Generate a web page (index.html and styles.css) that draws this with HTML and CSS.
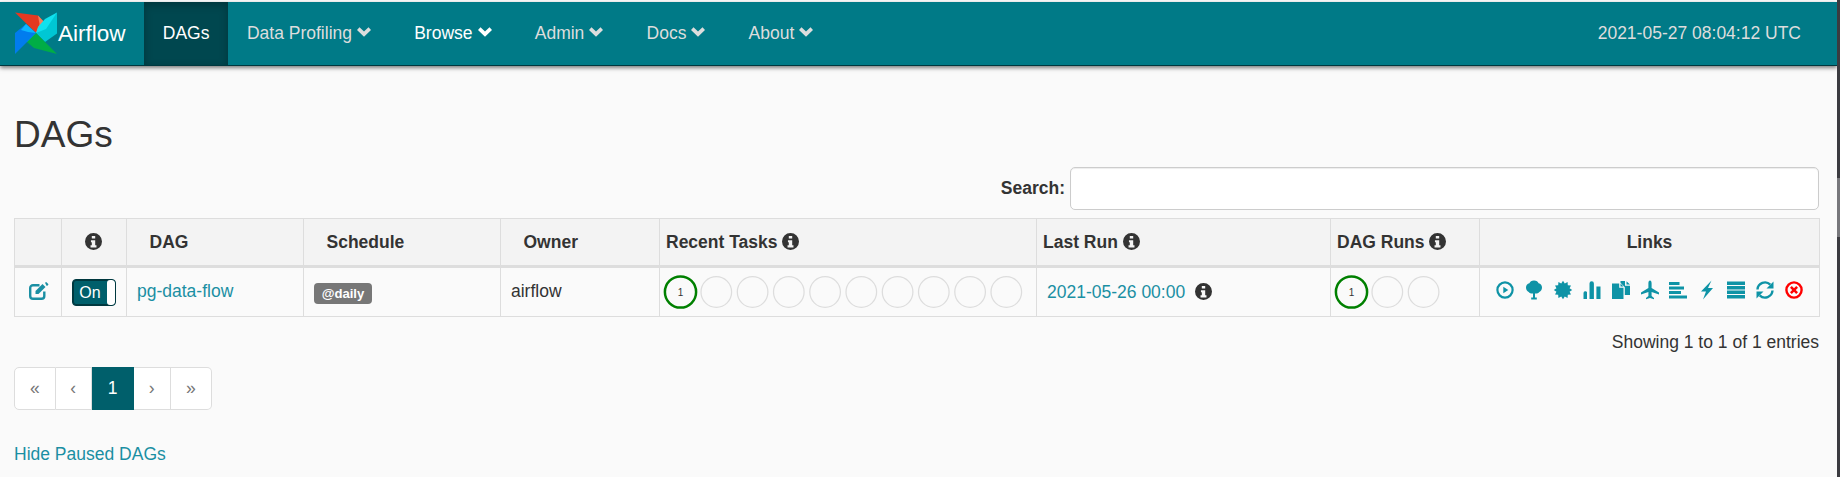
FILE: index.html
```html
<!DOCTYPE html>
<html lang="en">
<head>
<meta charset="utf-8">
<title>Airflow - DAGs</title>
<link rel="stylesheet" href="styles.css">
</head>
<body>
<svg class="sprite" aria-hidden="true">
  <symbol id="i-info" viewBox="0 0 20 20"><path fill-rule="evenodd" d="M10 0a10 10 0 1 0 0 20a10 10 0 0 0 0-20zM8 3.500h4v3H8zM7 8.500h5v6h1.500v2.500h-7v-2.500H8v-3.500H7z"/></symbol>
  <symbol id="i-chev" viewBox="0 0 14 10"><path d="M0 3l2.500-2.700L7 4.600 11.500.3 14 3 7 9.800z"/></symbol>
  <symbol id="i-play" viewBox="0 0 20 20"><circle cx="10" cy="10" r="7.600" fill="none" stroke="currentColor" stroke-width="2.200"/><path d="M8.300 6.800l5 3.200-5 3.200z"/></symbol>
  <symbol id="i-tree" viewBox="0 0 20 20"><path d="M10 .5c2.500 0 4 1.200 4.600 2.700 2.100.5 3.400 2.100 3.400 4.300 0 2.200-1.100 3.700-2.700 4.400-1 1.200-2.800 1.800-4.300 1.500V17.500h1.800V19.500h-5.600V17.500H9V13.400c-1.500.3-3.300-.3-4.300-1.500C3.100 11.200 2 9.700 2 7.500c0-2.200 1.300-3.800 3.400-4.300C6 1.700 7.500.5 10 .5z"/></symbol>
  <symbol id="i-cert" viewBox="0 0 20 20"><polygon points="19.200,10 16.570,11.760 17.970,14.600 14.810,14.810 14.600,17.970 11.760,16.570 10,19.200 8.240,16.570 5.400,17.970 5.190,14.810 2.030,14.600 3.430,11.760 .8,10 3.430,8.240 2.030,5.400 5.190,5.190 5.400,2.030 8.240,3.430 10,.8 11.760,3.430 14.600,2.030 14.810,5.190 17.970,5.400 16.570,8.240"/></symbol>
  <symbol id="i-bars" viewBox="0 0 20 20"><path d="M1.500 13a2 2 0 0 1 3.500-1V19H1.500zM7.500 3.500a2.200 2.200 0 0 1 4.400 0V19H7.500zM14.400 6.500h4.100V19h-4.100z"/></symbol>
  <symbol id="i-docs" viewBox="0 0 20 20"><path d="M1 3.500h7.200v4.300h4.300V19H1zM9.500 3.500l3 3h-3zM9.500 1h4.500v4.800H19V15h-5.200V7.200L9.500 2.800zM15.500 1.200L19 4.500h-3.500z"/></symbol>
  <symbol id="i-plane" viewBox="0 0 20 20"><path d="M10 .5c1 0 1.600 1.300 1.600 3V8l7.400 4.400v2l-7.400-2.400v4l2.400 2v1.300L10 18l-4 1.300V18l2.400-2v-4L1 14.400v-2L8.400 8V3.500C8.400 1.800 9 .5 10 .5z"/></symbol>
  <symbol id="i-gantt" viewBox="0 0 20 20"><path d="M1 2h10.500v3H1zM1 6.500h15v3H1zM1 11h12v3H1zM1 15.500h18v3H1z"/></symbol>
  <symbol id="i-bolt" viewBox="0 0 20 20"><path d="M14.500.5L4 11.500h5L6 19.500 16 8h-5z"/></symbol>
  <symbol id="i-list" viewBox="0 0 20 20"><path d="M1 1.500h18v3.500H1zM1 6h18v3.500H1zM1 10.500h18v3.500H1zM1 15h18v3.500H1z"/></symbol>
  <symbol id="i-sync" viewBox="0 0 20 20"><path d="M2.500 9.500A7.500 7.500 0 0 1 15.300 4.700" fill="none" stroke="currentColor" stroke-width="2.400"/><path d="M18.500 1.500v7h-7z"/><path d="M17.500 10.500A7.500 7.500 0 0 1 4.700 15.300" fill="none" stroke="currentColor" stroke-width="2.400"/><path d="M1.500 18.500v-7h7z"/></symbol>
  <symbol id="i-kill" viewBox="0 0 20 20"><circle cx="10" cy="10" r="7.600" fill="none" stroke="currentColor" stroke-width="2.400"/><path d="M7.800 6l2.200 2.200L12.200 6 14 7.800 11.800 10l2.200 2.200-1.800 1.800L10 11.800 7.800 14 6 12.200 8.200 10 6 7.800z"/></symbol>
</svg>
<div class="page">
  <nav class="navbar">
    <a class="brand" href="#">
      <svg class="logo" viewBox="0 0 44 44">
        <path fill="#e43921" d="M1 1.500L24 4.500 32 13 22 22z"/>
        <path fill="#f37e5c" d="M24 4.500L32 13 22 22 25.500 13z"/>
        <path fill="#00c7d4" d="M43 1.500V22.500L31 31 22 22z"/>
        <path fill="#11e1ee" d="M43 1.500L31 8 24 16 22 22 32 18z"/>
        <path fill="#00ad46" d="M43 43L20 37 13 31 22 22z"/>
        <path fill="#04d659" d="M22 22L13 31 13 25 17 21z"/>
        <path fill="#017cee" d="M1 43V22L12 13 22 22z"/>
        <path fill="#0cb6ff" d="M12 13L22 22 14 21 7 19z"/>
      </svg>
      <span>Airflow</span>
    </a>
    <ul class="menu">
      <li class="item active"><a href="#">DAGs</a></li>
      <li class="item"><a href="#">Data Profiling<svg class="chev"><use href="#i-chev"/></svg></a></li>
      <li class="item bright"><a href="#">Browse<svg class="chev"><use href="#i-chev"/></svg></a></li>
      <li class="item"><a href="#">Admin<svg class="chev"><use href="#i-chev"/></svg></a></li>
      <li class="item"><a href="#">Docs<svg class="chev"><use href="#i-chev"/></svg></a></li>
      <li class="item"><a href="#">About<svg class="chev"><use href="#i-chev"/></svg></a></li>
    </ul>
    <div class="clock">2021-05-27 08:04:12 UTC</div>
  </nav>
  <main class="content">
    <h1 class="title">DAGs</h1>
    <div class="search">
      <label class="search-label" for="q">Search:</label>
      <input class="search-input" id="q" type="search">
    </div>
    <table class="dags">
      <thead>
        <tr>
          <th class="c-edit"></th>
          <th class="c-toggle ctr"><svg class="info"><use href="#i-info"/></svg></th>
          <th class="c-dag pad-l">DAG</th>
          <th class="c-sched pad-l">Schedule</th>
          <th class="c-owner pad-l">Owner</th>
          <th class="c-tasks">Recent Tasks <svg class="info"><use href="#i-info"/></svg></th>
          <th class="c-run">Last Run <svg class="info"><use href="#i-info"/></svg></th>
          <th class="c-runs">DAG Runs <svg class="info"><use href="#i-info"/></svg></th>
          <th class="c-links ctr">Links</th>
        </tr>
      </thead>
      <tbody>
        <tr>
          <td class="ctr edit-cell"><a href="#"><svg class="edit" viewBox="0 0 20 18"><path class="edit-box" d="M10.500 3.200H4A2.800 2.800 0 0 0 1.200 6v8A2.800 2.800 0 0 0 4 16.800h8.500A2.800 2.800 0 0 0 15.300 14V9.500"/><path d="M6.500 12V9L13.500 2 16.500 5 9.500 12z"/><path d="M16 .8l1.200-.8 2.300 2.300-.8 1.200-1 .5z"/></svg></a></td>
          <td class="ctr">
            <div class="toggle"><span class="toggle-on">On</span><span class="toggle-handle"></span></div>
          </td>
          <td class="text-cell"><a href="#">pg-data-flow</a></td>
          <td class="sched"><span class="badge">@daily</span></td>
          <td class="text-cell">airflow</td>
          <td class="circles-cell tasks">
            <svg class="circles c10">
              <circle class="ok" cx="17.500" cy="17" r="15.600"/><text x="17.500" y="20.500">1</text>
              <circle cx="53.300" cy="17" r="15.300"/><circle cx="89.600" cy="17" r="15.300"/><circle cx="125.800" cy="17" r="15.300"/><circle cx="162.100" cy="17" r="15.300"/><circle cx="198.300" cy="17" r="15.300"/><circle cx="234.600" cy="17" r="15.300"/><circle cx="270.800" cy="17" r="15.300"/><circle cx="307.100" cy="17" r="15.300"/><circle cx="343.300" cy="17" r="15.300"/>
            </svg>
          </td>
          <td class="last-run"><a href="#">2021-05-26 00:00</a><svg class="info"><use href="#i-info"/></svg></td>
          <td class="circles-cell">
            <svg class="circles c3">
              <circle class="ok" cx="20.500" cy="17" r="15.600"/><text x="20.500" y="20.500">1</text>
              <circle cx="56.300" cy="17" r="15.300"/><circle cx="92.600" cy="17" r="15.300"/>
            </svg>
          </td>
          <td class="links-cell">
            <div class="links">
              <svg class="lnk"><use href="#i-play"/></svg>
              <svg class="lnk"><use href="#i-tree"/></svg>
              <svg class="lnk"><use href="#i-cert"/></svg>
              <svg class="lnk"><use href="#i-bars"/></svg>
              <svg class="lnk"><use href="#i-docs"/></svg>
              <svg class="lnk"><use href="#i-plane"/></svg>
              <svg class="lnk"><use href="#i-gantt"/></svg>
              <svg class="lnk"><use href="#i-bolt"/></svg>
              <svg class="lnk"><use href="#i-list"/></svg>
              <svg class="lnk"><use href="#i-sync"/></svg>
              <svg class="lnk kill"><use href="#i-kill"/></svg>
            </div>
          </td>
        </tr>
      </tbody>
    </table>
    <div class="showing">Showing 1 to 1 of 1 entries</div>
    <ul class="pager">
      <li class="pg w1">«</li>
      <li class="pg w2">‹</li>
      <li class="pg w3 current">1</li>
      <li class="pg w2">›</li>
      <li class="pg w1">»</li>
    </ul>
    <a class="hide-paused" href="#">Hide Paused DAGs</a>
  </main>
</div>
<aside class="scrollbar"><div class="thumb"></div></aside>
</body>
</html>
```
FILE: styles.css
```css
* { box-sizing: border-box; }
html, body { margin: 0; height: 100%; }
body {
  display: flex;
  overflow: hidden;
  background: #fafafa;
  color: #333;
  font-family: "Liberation Sans", Arial, sans-serif;
  font-size: 17.5px;
  line-height: 25px;
}
a { color: #1a8fa3; text-decoration: none; }
.sprite { display: none; }
.page { flex: 1; min-width: 0; padding-top: 2px; }
.scrollbar { width: 3px; background: #3b3b40; }
.thumb { margin-top: 178px; height: 59px; background: #77777b; }

/* navbar */
.navbar {
  display: flex;
  align-items: stretch;
  height: 64px;
  background: #007a87;
  border-bottom: 1px solid #00383f;
  box-shadow: 0 2px 4px rgba(0, 0, 0, .5);
}
.brand {
  display: flex;
  align-items: center;
  width: 144px;
  padding-left: 14px;
  color: #fff;
  font-size: 22.5px;
}
.logo { width: 44px; height: 44px; flex: none; margin-bottom: 1px; }
.menu { display: flex; list-style: none; margin: 0; padding: 0; flex: 1; }
.item a {
  display: flex;
  align-items: center;
  height: 100%;
  padding: 0 18.75px;
  color: #ddd;
}
.item.bright a { color: #fff; }
.item.active a {
  color: #fff;
  background: #00474f;
  box-shadow: inset 0 3px 9px rgba(0, 0, 0, .25);
}
.chev { width: 14px; height: 10px; margin: -3px 5.7px 0 5px; fill: currentColor; }
.clock { align-self: center; padding-right: 36px; color: #ddd; }

/* content */
.content { padding: 0 18px 0 14px; }
.title {
  margin: 0;
  padding-top: 49px;
  font-size: 37px;
  line-height: 40px;
  font-weight: 400;
}
.search {
  display: flex;
  justify-content: flex-end;
  align-items: center;
  gap: 5px;
  margin-top: 12px;
}
.search-label { font-weight: 700; }
.search-input {
  width: 749px;
  height: 43px;
  background: #fff;
  border: 1px solid #ccc;
  border-radius: 5px;
  box-shadow: inset 0 1px 1px rgba(0, 0, 0, .075);
}

/* table */
.dags {
  width: 1805px;
  margin-top: 8px;
  table-layout: fixed;
  border-collapse: collapse;
  background: #fafafa;
}
.dags th, .dags td { border: 1px solid #ddd; padding: 0; vertical-align: middle; }
.dags th {
  height: 48px;
  background: #f3f3f3;
  border-bottom: 3px solid #ddd;
  text-align: left;
  padding: 0 6px;
  font-weight: 700;
}
.dags td { height: 50px; }
.dags th.ctr, .dags td.ctr { text-align: center; }
.dags th.pad-l { padding-left: 22.5px; }
.dags th.c-toggle { padding-right: 8px; }
.c-edit { width: 47px; }
.c-toggle { width: 65px; }
.c-dag { width: 177px; }
.c-sched { width: 197px; }
.c-owner { width: 159px; }
.c-tasks { width: 377px; }
.c-run { width: 294px; }
.c-runs { width: 149px; }
.c-links { width: 340px; }
.info { width: 17px; height: 17px; fill: #333; vertical-align: -2px; }
.dags td.edit-cell { padding: 0 0 4px 2px; }
.edit { width: 20px; height: 18px; fill: #1a8fa3; vertical-align: middle; }
.edit-box { fill: none; stroke: #1a8fa3; stroke-width: 2.4; }
.toggle {
  display: inline-flex;
  width: 44px;
  height: 27px;
  vertical-align: middle;
  background: #005f6b;
  border: 1px solid #00383f;
  border-radius: 4px;
  overflow: hidden;
  color: #fff;
  box-shadow: inset 0 0 0 1px #00383f;
}
.toggle-on { flex: 1; text-align: center; font-size: 16px; line-height: 25px; }
.toggle-handle { width: 8px; background: #fff; border-radius: 3px; }
.dags td.text-cell { padding: 0 0 2px 10px; }
.dags td.sched { padding-left: 10px; }
.badge {
  display: inline-block;
  width: 58px;
  height: 21px;
  background: #777;
  border-radius: 4px;
  color: #fff;
  font-size: 13.1px;
  font-weight: 700;
  line-height: 22px;
  text-align: center;
  vertical-align: middle;
  margin-top: 1px;
}
.circles-cell { line-height: 0; }
.dags td.tasks { padding-left: 3px; }
.circles { height: 34px; vertical-align: middle; }
.circles.c10 { width: 370px; }
.circles.c3 { width: 120px; }
.circles circle { fill: none; stroke: #ddd; stroke-width: 1.25; }
.circles circle.ok { stroke: #008000; stroke-width: 2.5; }
.circles text { font-size: 10px; text-anchor: middle; fill: #333; font-family: "Liberation Sans", Arial, sans-serif; }
.dags td.last-run { padding-left: 10px; }
.last-run .info { margin-left: 10px; }
.links { display: flex; justify-content: center; gap: 8.9px; padding-bottom: 5px; }
.lnk { width: 20px; height: 20px; fill: #0e93a6; color: #0e93a6; flex: none; }
.lnk.kill { fill: #f00; color: #f00; }

/* footer bits */
.showing { margin-top: 13px; text-align: right; }
.pager {
  display: flex;
  width: max-content;
  margin: 12px 0 0;
  padding: 0;
  list-style: none;
}
.pg {
  height: 43px;
  line-height: 41px;
  text-align: center;
  background: #fff;
  border: 1px solid #ddd;
  border-left-width: 0;
  color: #777;
}
.pg:first-child { border-left-width: 1px; border-radius: 5px 0 0 5px; }
.pg:last-child { border-radius: 0 5px 5px 0; }
.w1 { width: 41.5px; }
.w2 { width: 36.5px; }
.w3 { width: 42px; }
.pg.current { background: #005f6b; border-color: #005f6b; color: #fff; }
.hide-paused { display: block; margin-top: 32px; }
```
